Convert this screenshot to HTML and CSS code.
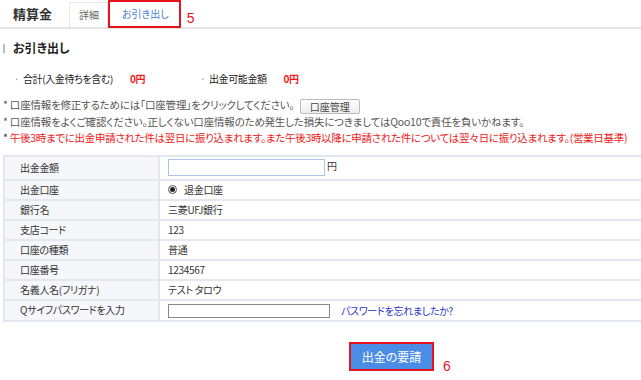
FILE: index.html
```html
<!DOCTYPE html>
<html lang="ja">
<head>
    <meta charset="UTF-8">
    <title>精算金 - お引き出し</title>
    <link rel="stylesheet" href="styles.css">
</head>
<body>
    <div class="header">
        <h1 class="title">精算金</h1>
        <div class="tabs">
            <a class="tab" href="#">詳細</a>
            <a class="tab active" href="#">お引き出し</a>
            <span class="mark">5</span>
        </div>
    </div>

    <h2 class="section-title">お引き出し</h2>

    <div class="summary">
        <div class="sum-item">
            <span class="dot">·</span>
            <span class="sum-label">合計(入金待ちを含む)</span>
            <span class="sum-value">0円</span>
        </div>
        <div class="sum-item">
            <span class="dot">·</span>
            <span class="sum-label">出金可能金額</span>
            <span class="sum-value">0円</span>
        </div>
    </div>

    <div class="notes">
        <p class="note">* 口座情報を修正するためには「口座管理」をクリックしてください。 <button class="small-btn">口座管理</button></p>
        <p class="note">* 口座情報をよくご確認ください。正しくない口座情報のため発生した損失につきましてはQoo10で責任を負いかねます。</p>
        <p class="note warn">* <span class="red">午後3時までに出金申請された件は翌日に振り込まれます。また午後3時以降に申請された件については翌々日に振り込まれます。(営業日基準)</span></p>
    </div>

    <table class="form-table">
        <tr class="first">
            <th>出金金額</th>
            <td><input type="text" class="amount"> 円</td>
        </tr>
        <tr>
            <th>出金口座</th>
            <td><label class="radio"><span class="radio-dot"></span>退金口座</label></td>
        </tr>
        <tr>
            <th>銀行名</th>
            <td>三菱UFJ銀行</td>
        </tr>
        <tr>
            <th>支店コード</th>
            <td>123</td>
        </tr>
        <tr>
            <th>口座の種類</th>
            <td>普通</td>
        </tr>
        <tr>
            <th>口座番号</th>
            <td>1234567</td>
        </tr>
        <tr>
            <th>名義人名(フリガナ)</th>
            <td>テスト タロウ</td>
        </tr>
        <tr class="last">
            <th>Qサイフパスワードを入力</th>
            <td><input type="password" class="pw"><a class="forgot" href="#">パスワードを忘れましたか?</a></td>
        </tr>
    </table>

    <div class="actions">
        <button class="submit">出金の要請</button>
        <span class="mark">6</span>
    </div>
</body>
</html>
```

FILE: styles.css
```css
/* Reset */
* {
    margin: 0;
    padding: 0;
    box-sizing: border-box;
}

body {
    width: 641px;
    font-family: "Noto Sans CJK JP", "Liberation Sans", sans-serif;
    font-feature-settings: "palt";
    font-size: 10px;
    color: #333;
    background: #fff;
}

button,
input {
    font-feature-settings: "palt";
}

/* Header + tabs */
.header {
    display: flex;
    align-items: flex-end;
    height: 29px;
    border-bottom: 2px solid #e5e5e5;
}

.title {
    font-size: 13px;
    font-weight: bold;
    color: #333;
    padding: 0 0 3px 13px;
    width: 69px;
    line-height: 20px;
}

.tabs {
    display: flex;
    align-items: flex-end;
    height: 27px;
}

.tab {
    display: block;
    height: 25px;
    line-height: 23px;
    padding: 0 8px 0 9px;
    color: #666;
    font-size: 10px;
    text-decoration: none;
    border: 1px solid #e8e8e8;
    border-bottom: none;
    background: #fff;
}

.tab.active {
    color: #4a7fd0;
    height: 28px;
    line-height: 24px;
    padding: 0 10px 0 12px;
    margin-bottom: -1px;
    border: 2px solid #e8141c;
}

.mark {
    color: #e8141c;
    font-family: "Liberation Sans", sans-serif;
    font-size: 14px;
    margin-left: 6px;
    line-height: 14px;
    margin-bottom: 2px;
}

/* Section title */
.section-title {
    display: flex;
    align-items: center;
    gap: 8px;
    margin: 11px 0 0 3px;
    font-size: 12px;
    font-weight: bold;
    color: #222;
    line-height: 16px;
}

.section-title::before {
    content: "";
    display: block;
    width: 2px;
    height: 9px;
    background: #bbb;
}

/* Summary */
.summary {
    display: flex;
    margin: 15px 0 0 14px;
    line-height: 16px;
    letter-spacing: -0.4px;
}

.sum-item {
    display: flex;
    align-items: center;
    width: 186px;
}

.dot {
    color: #999;
    width: 9px;
}

.sum-label {
    color: #222;
    margin-right: 17px;
}

.sum-value {
    color: #f01818;
    font-weight: bold;
}

/* Notes */
.notes {
    margin: 10px 0 0 3px;
}

.note {
    font-size: 10.5px;
    letter-spacing: -0.2px;
    color: #555;
    line-height: 16.5px;
    white-space: nowrap;
}

.note.warn {
    color: #333;
}

.red {
    color: #f01818;
    letter-spacing: -0.3px;
}

.small-btn {
    font-family: inherit;
    font-size: 10px;
    color: #444;
    height: 15px;
    width: 60px;
    margin-left: 3px;
    border: 1px solid #bbb;
    border-radius: 2px;
    background: linear-gradient(#fff, #ececec);
    vertical-align: middle;
    line-height: 13px;
}

/* Form table */
.form-table {
    margin: 8px 0 0 3px;
    width: 638px;
    border-collapse: collapse;
    border-top: 2px solid #e3e8f0;
    letter-spacing: -0.3px;
}

.form-table th,
.form-table td {
    height: 20px;
    border-bottom: 2px solid #e3e8f0;
    font-weight: normal;
    text-align: left;
    color: #333;
    line-height: 14px;
}

.form-table th {
    width: 155px;
    padding-left: 15px;
    background: #f5f7fa;
    border-left: 2px solid #e3e8f0;
    border-right: 2px solid #e3e8f0;
}

.form-table td {
    padding-left: 8px;
}

.form-table tr.first th,
.form-table tr.first td {
    height: 24px;
}

.form-table tr.last th,
.form-table tr.last td {
    height: 21px;
}

.amount {
    width: 157px;
    height: 17px;
    border: 1px solid #a9c4e6;
    vertical-align: middle;
}

.pw {
    width: 162px;
    height: 14px;
    border: 1px solid #888;
    vertical-align: middle;
}

.radio {
    display: flex;
    align-items: center;
    gap: 7px;
}

.radio-dot {
    width: 9px;
    height: 9px;
    border: 1px solid #555;
    border-radius: 50%;
    display: flex;
    align-items: center;
    justify-content: center;
}

.radio-dot::after {
    content: "";
    width: 5px;
    height: 5px;
    border-radius: 50%;
    background: #222;
}

.forgot {
    color: #2b35c8;
    text-decoration: none;
    margin-left: 11px;
    vertical-align: middle;
}

/* Actions */
.actions {
    display: flex;
    align-items: flex-end;
    margin: 20px 0 0 349px;
}

.submit {
    width: 85px;
    height: 29px;
    font-family: inherit;
    font-size: 12px;
    color: #fff;
    background: #4b8de6;
    border: 2px solid #e8141c;
    cursor: pointer;
}

.actions .mark {
    margin-left: 9px;
    margin-bottom: -2px;
}
```
